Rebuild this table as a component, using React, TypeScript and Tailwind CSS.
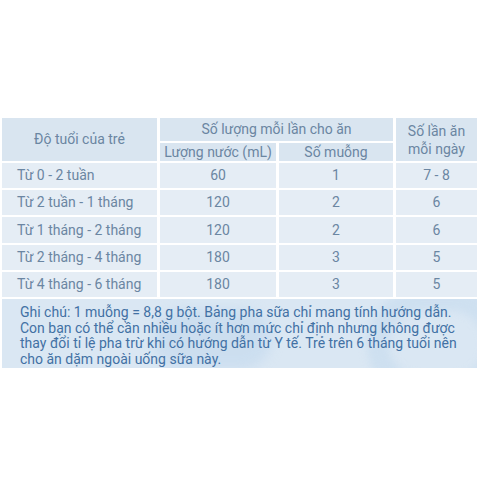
const rows = [
  { age: "Từ 0 - 2 tuần", water: "60", spoons: "1", times: "7 - 8" },
  { age: "Từ 2 tuần - 1 tháng", water: "120", spoons: "2", times: "6" },
  { age: "Từ 1 tháng - 2 tháng", water: "120", spoons: "2", times: "6" },
  { age: "Từ 2 tháng - 4 tháng", water: "180", spoons: "3", times: "5" },
  { age: "Từ 4 tháng - 6 tháng", water: "180", spoons: "3", times: "5" },
]

const noteLines = [
  "Ghi chú: 1 muỗng = 8,8 g bột. Bảng pha sữa chỉ mang tính hướng dẫn.",
  "Con bạn có thể cần nhiều hoặc ít hơn mức chỉ định nhưng không được",
  "thay đổi tỉ lệ pha trừ khi có hướng dẫn từ Y tế. Trẻ trên 6 tháng tuổi nên",
  "cho ăn dặm ngoài uống sữa này.",
]

export default function App() {
  return (
    <div className="w-[480px] h-[480px] bg-white pt-[118px] pl-[2px] font-['Roboto',sans-serif] text-[#6b86a2]">
      <div className="w-[475px] grid grid-cols-[155px_116px_114px_81px] gap-x-[3px] gap-y-[2px]">
        {/* header */}
        <div className="row-span-2 bg-[#d9e5f0] flex items-center justify-center text-[14px]">
          Độ tuổi của trẻ
        </div>
        <div className="col-span-2 h-[23px] bg-[#d9e5f0] flex items-center justify-center text-[14px]">
          Số lượng mỗi lần cho ăn
        </div>
        <div className="row-span-2 bg-[#d9e5f0] flex flex-col items-center justify-center text-[14px] leading-[18px]">
          <span>Số lần ăn</span>
          <span>mỗi ngày</span>
        </div>
        <div className="h-[18px] bg-[#d9e5f0] flex items-center justify-center text-[14px]">
          Lượng nước (mL)
        </div>
        <div className="h-[18px] bg-[#d9e5f0] flex items-center justify-center text-[14px]">
          Số muỗng
        </div>

        {/* body */}
        {rows.map((r, i) => (
          <div key={i} className="contents">
            <div className={`${i === 2 ? "h-[26px]" : "h-[25px]"} bg-[#e5edf5] flex items-center pl-[15px] text-[14px]`}>
              {r.age}
            </div>
            <div className="bg-[#e5edf5] flex items-center justify-center text-[14px]">{r.water}</div>
            <div className="bg-[#e5edf5] flex items-center justify-center text-[14px]">{r.spoons}</div>
            <div className="bg-[#e5edf5] flex items-center justify-center text-[14px]">{r.times}</div>
          </div>
        ))}

        {/* note */}
        <div className="col-span-4 relative overflow-hidden h-[69px] bg-[#dae7f3] pl-[18px] pt-[6px] text-[14px] leading-[15.5px] text-[#4271a4]">
          <div className="absolute left-[150px] top-[10px] w-[120px] h-[60px] rounded-full bg-[#c3d9ee] opacity-60 blur-[6px]" />
          <div className="absolute right-[-30px] top-[-10px] w-[140px] h-[110px] rounded-full border-[22px] border-[#c9ddef] opacity-70 blur-[4px]" />
          <div className="relative">
            {noteLines.map((l) => (
              <div key={l} className="whitespace-nowrap">{l}</div>
            ))}
          </div>
        </div>
      </div>
    </div>
  )
}
